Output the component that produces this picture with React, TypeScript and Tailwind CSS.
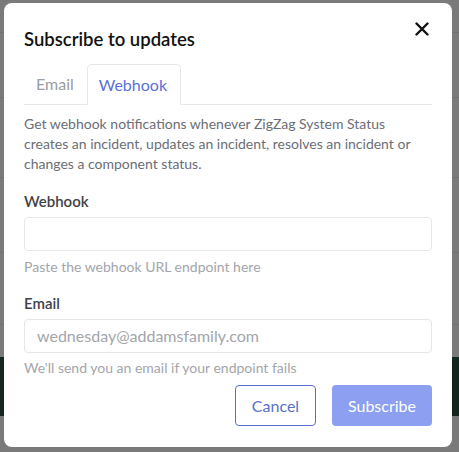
import React from "react";

const font = { fontFamily: '"Segoe UI", Lato, "Noto Sans", sans-serif' };

function Backdrop() {
  return (
    <div className="absolute inset-0 flex flex-col bg-[#7a7a7a]">
      <div className="h-[33px] border-b border-[#717171]" />
      <div className="h-[65px] border-b border-[#717171]" />
      <div className="h-[80px] border-b border-[#717171]" />
      <div className="h-[75px] border-b border-[#717171]" />
      <div className="h-[72px] border-b border-[#717171]" />
      <div className="h-[32px]" />
      <div className="h-[59px] bg-[#15261e]" />
    </div>
  );
}

export default function App() {
  return (
    <div className="relative w-[459px] h-[452px] overflow-hidden" style={font}>
      <Backdrop />
      <div className="absolute left-[4px] top-[3px] w-[448px] h-[444px] bg-white rounded-[8px] px-[20px] pt-[24px]">
        <div className="flex items-start justify-between">
          <h2 className="text-[18.5px] font-semibold text-[#111] leading-[24px]">Subscribe to updates</h2>
          <button className="mt-[-10px] mr-[-2px] w-[24px] h-[24px] flex items-center justify-center">
            <svg width="14" height="14" viewBox="0 0 14 14" stroke="#111" strokeWidth="2.4" strokeLinecap="round">
              <path d="M1.5 1.5 L12.5 12.5 M12.5 1.5 L1.5 12.5" />
            </svg>
          </button>
        </div>

        <div className="mt-[13px] flex border-b border-[#e5e7eb] h-[41px]">
          <div className="px-[12px] pt-[8px] text-[16px] text-[#9a9ca3]">Email</div>
          <div className="ml-[1px] px-[11px] pt-[8px] text-[16px] text-[#5a70d8] bg-white border border-[#e5e7eb] border-b-white rounded-t-[5px] mb-[-1px] w-[94px]">
            Webhook
          </div>
        </div>

        <p className="mt-[9px] text-[14px] leading-[20px] text-[#6b6e76]">
          Get webhook notifications whenever ZigZag System Status creates an incident, updates an incident, resolves an incident or changes a component status.
        </p>

        <div className="mt-[17px] text-[15px] font-semibold text-[#3f4248] leading-[20px]">Webhook</div>
        <div className="mt-[6px] h-[34px] border border-[#e5e7eb] rounded-[4px]" />
        <div className="mt-[6px] text-[14px] leading-[20px] text-[#a3a5ab]">Paste the webhook URL endpoint here</div>

        <div className="mt-[16px] text-[15px] font-semibold text-[#3f4248] leading-[20px]">Email</div>
        <div className="mt-[6px] h-[34px] border border-[#e5e7eb] rounded-[4px] flex items-center pl-[12px] text-[16px] text-[#a3a5ab]">
          wednesday@addamsfamily.com
        </div>
        <div className="mt-[5px] text-[14px] leading-[20px] text-[#a3a5ab]">We'll send you an email if your endpoint fails</div>

        <div className="mt-[7px] flex justify-end gap-[16px]">
          <button className="w-[81px] h-[41px] border border-[#5a70c8] rounded-[4px] text-[16px] text-[#5a70c8]">Cancel</button>
          <button className="w-[100px] h-[41px] rounded-[4px] bg-[#8c9ff0] text-[16px] text-white">Subscribe</button>
        </div>
      </div>
    </div>
  );
}
